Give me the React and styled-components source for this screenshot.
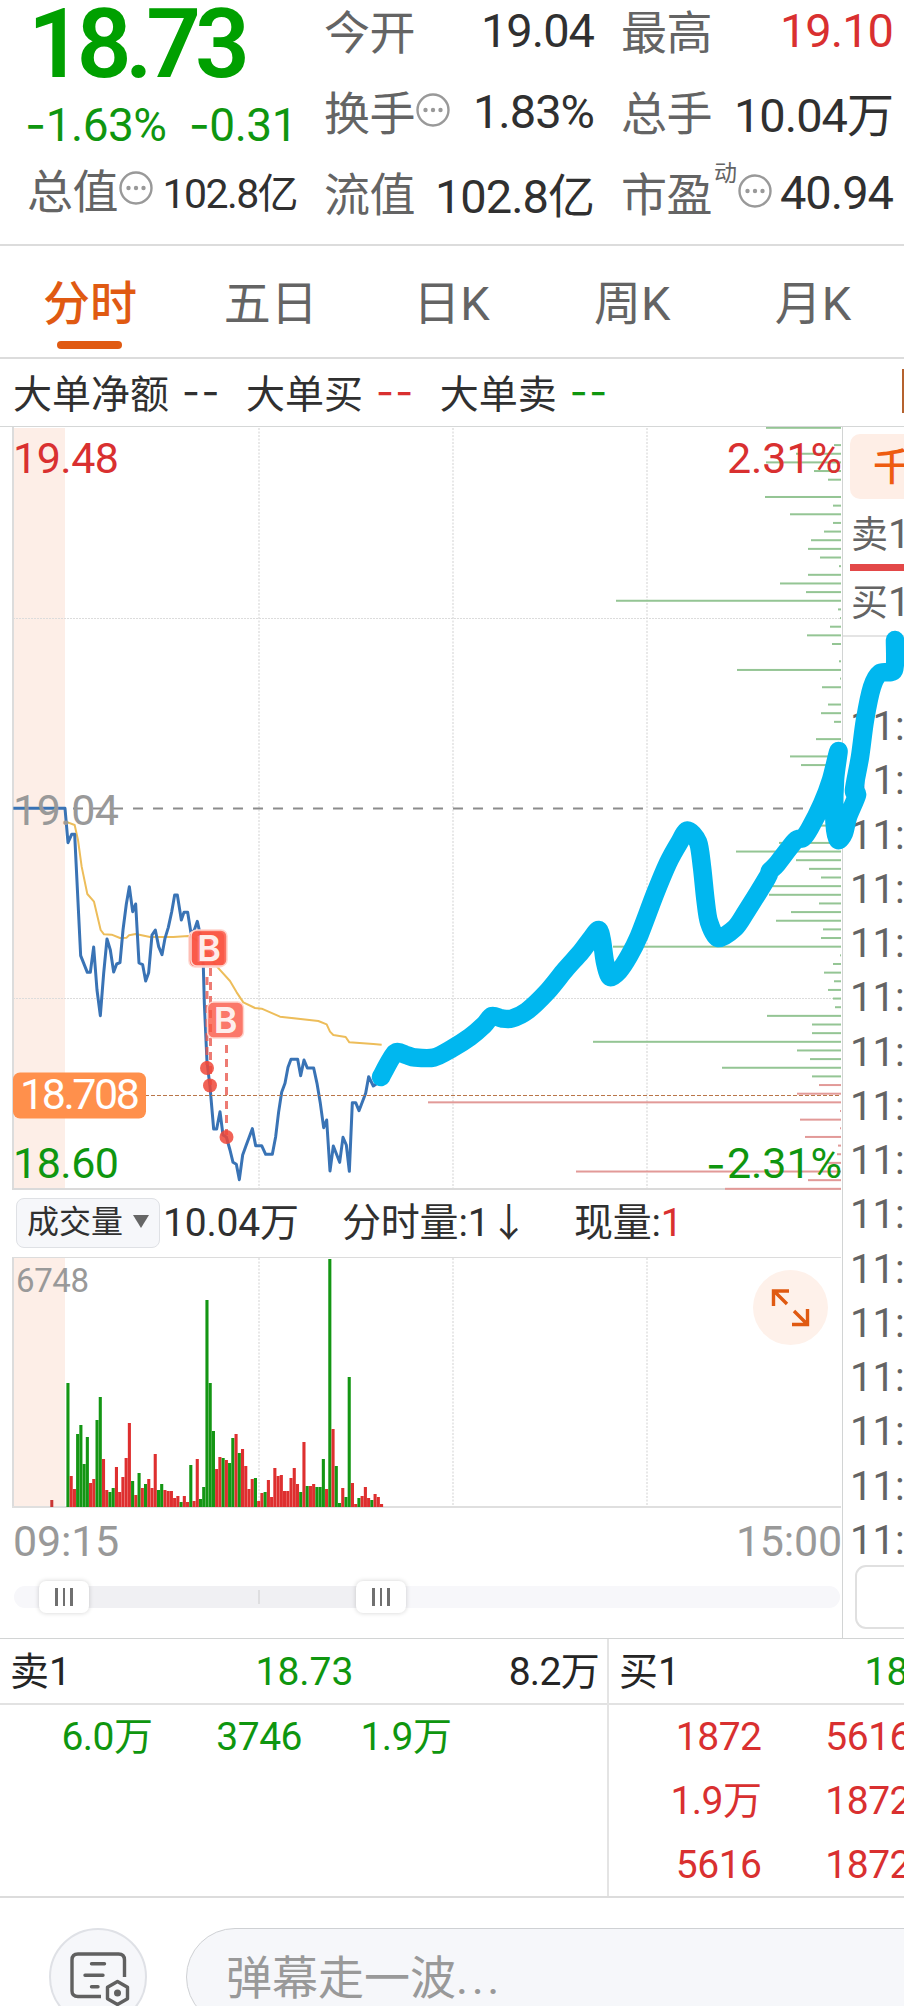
import styled, { createGlobalStyle } from "styled-components"

const GlobalStyle = createGlobalStyle`
    * { box-sizing: border-box; }
    body {
        margin: 0;
        background: #fff;
        color: #303030;
        font-family: Roboto, "Noto Sans CJK SC", sans-serif;
        overflow: hidden;
    }
`
const RED = "#d93030"
const GREEN = "#0f960f"

const Page = styled.div`
    position: relative;
    width: 904px;
    height: 2006px;
    overflow: hidden;
    white-space: nowrap;
`
const Header = styled.header`
    display: grid;
    grid-template-columns: 269px 269px 271px;
    column-gap: 28px;
    height: 246px;
    padding-left: 28px;
    border-bottom: 2px solid #dcdcdc;
`
const StatColumn = styled.div`
    display: flex;
    flex-direction: column;
    margin-top: ${p => p.$top || 0}px;
`
const Price = styled.div`
    height: 77px;
    line-height: 89px;
    font-size: 96px;
    font-weight: 600;
    letter-spacing: -6.2px;
    color: #00a000;
`
const Change = styled.div`
    display: flex;
    justify-content: space-between;
    height: 76px;
    line-height: 95px;
    font-size: 46px;
    letter-spacing: -0.5px;
    color: ${GREEN};
    & > span { margin-left: -3px; }
`
const Stat = styled.div`
    display: flex;
    align-items: center;
    height: 81px;
    & > svg { flex: none; margin: -4px 0 0 1px; }
`
const StatName = styled.span`
    margin: -4px 0 0 -1px;
    font-size: 46px;
    letter-spacing: -0.5px;
    color: #646464;
`
const Sup = styled.span`
    margin: 5px 0 0 2px;
    align-self: flex-start;
    font-size: 23px;
    line-height: 34px;
    color: #646464;
`
const StatValue = styled.span`
    margin-left: auto;
    font-size: ${p => p.$size || 47}px;
    letter-spacing: ${p => p.$size ? -1.6 : -1}px;
    color: ${p => p.$color || "#303030"};
`
const Hyphen = styled.span`
    font-family: Inter, sans-serif;
    color: ${p => p.$color || "inherit"};
`
const Tabs = styled.nav`
    display: flex;
    height: 113px;
    border-bottom: 2px solid #dcdcdc;
`
const Tab = styled.div`
    flex: 1;
    display: flex;
    flex-direction: column;
    align-items: center;
    margin-left: -1px;
    font-size: 47px;
    line-height: 115px;
    color: ${p => p.$active ? "#e05a12" : "#646464"};
    font-weight: ${p => p.$active ? 500 : 400};
    &::after {
        content: "";
        width: 65px;
        height: 8px;
        margin-top: -20px;
        border-radius: 4px;
        background: ${p => p.$active ? "#e05a12" : "transparent"};
    }
`
const OrderBar = styled.div`
    display: flex;
    align-items: center;
    gap: 25px;
    height: 68px;
    padding: 0 0 4px 13px;
    border-bottom: 1px solid #d5d7d7;
    font-size: 39px;
    & > span { display: flex; gap: 13px; }
    & > span > span {
        padding-top: 5px;
        letter-spacing: 1.5px;
    }
`
const OrderEdge = styled.i`
    margin-left: auto;
    width: 2px;
    height: 44px;
    background: #b5622e;
`
const Main = styled.main`
    display: flex;
    height: 1211px;
`
const ChartColumn = styled.section`
    width: 843px;
    border-right: 1px solid #d2d4d4;
`
const Chart = styled.svg`
    display: block;
    font-size: 43px;
`
const VolumeBar = styled.div`
    display: flex;
    align-items: center;
    height: 67px;
    padding: 0 0 2px 16px;
    font-size: 39px;
    line-height: 54px;
`
const VolumeSelect = styled.div`
    display: flex;
    align-items: center;
    justify-content: space-between;
    width: 144px;
    height: 50px;
    padding: 0 10px 2px 10px;
    margin-right: 3px;
    border: 1px solid #dfe1e5;
    border-radius: 8px;
    background: #f6f7fa;
    font-size: 32px;
`
const Triangle = styled.i`
    border: 8px solid transparent;
    border-top: 13px solid #666;
    border-bottom: 0;
`
const VolumeItem = styled.span`
    width: ${p => p.$width}px;
    margin-top: 1px;
    letter-spacing: -0.2px;
`
const RedText = styled.span`
    color: ${RED};
`
const TimeAxis = styled.div`
    display: flex;
    justify-content: space-between;
    height: 66px;
    padding: 0 0 0 13px;
    line-height: 66px;
    font-size: 43px;
    letter-spacing: -0.2px;
    color: #999;
`
const Track = styled.div`
    display: flex;
    align-items: center;
    width: 826px;
    height: 22px;
    margin: 12px 0 0 14px;
    padding-left: 25px;
    border-radius: 11px;
    background: #f7f7fa;
`
const Range = styled.div`
    display: flex;
    align-items: center;
    justify-content: space-between;
    width: 367px;
    height: 22px;
    background: #f0f0f3;
`
const Handle = styled.div`
    display: flex;
    align-items: center;
    justify-content: center;
    gap: 5px;
    width: 50px;
    height: 32px;
    border-radius: 7px;
    background: #fff;
    box-shadow: 0 0 5px rgba(0, 0, 0, .18);
    & i { width: 2.5px; height: 18px; background: #707070; }
`
const Tick = styled.i`
    width: 2px;
    height: 14px;
    margin-left: 73px;
    background: #dedee0;
`
const Side = styled.aside`
    width: 61px;
    padding: 7px 0 0 7px;
    overflow: hidden;
    color: #646464;
`
const SideButton = styled.div`
    height: 65px;
    width: 120px;
    padding-left: 23px;
    border-radius: 10px;
    background: #feeee6;
    font-size: 38px;
    font-weight: 500;
    line-height: 66px;
    color: #ee5c10;
`
const SideQuote = styled.div`
    height: ${p => p.$height}px;
    padding-left: 1px;
    line-height: ${p => p.$line}px;
    font-size: 40px;
    & span { font-size: 37px; }
`
const RedLine = styled.div`
    height: 7px;
    background: #e34848;
`
const SideDivider = styled.div`
    height: 2px;
    margin-left: -7px;
    background: #e4e4e4;
`
const TickTimes = styled.div`
    padding: 63px 0 0 0;
    font-size: 40px;
    line-height: 54.25px;
`
const SideBox = styled.div`
    width: 100px;
    height: 64px;
    margin: -3px 0 0 5px;
    border: 2px solid #e0e0e0;
    border-radius: 11px;
`
const Book = styled.section`
    display: grid;
    grid-template-columns: 609px 609px;
    grid-template-rows: 257px;
    height: 260px;
    border-top: 1px solid #d2d4d4;
    border-bottom: 2px solid #dcdcdc;
    font-size: 39px;
`
const BookSide = styled.div`
    border-right: 2px solid #e4e4e4;
`
const BookHead = styled.div`
    display: grid;
    grid-template-columns: 1fr 1fr 1fr;
    height: 66px;
    padding: 0 8px 0 10px;
    border-bottom: 2px solid #e2e2e2;
    line-height: 67px;
    color: #252525;
    & span:nth-child(2) { text-align: center; color: ${GREEN}; }
    & span:nth-child(3) { text-align: right; letter-spacing: -0.7px; }
`
const BookCells = styled.div`
    display: grid;
    grid-template-columns: repeat(4, 149.5px);
    padding: 0 0 0 3px;
    line-height: 64px;
    letter-spacing: -0.5px;
    text-align: right;
    color: ${p => p.$color};
`
const Footer = styled.footer`
    display: flex;
    gap: 39px;
    padding: 30px 0 0 49px;
`
const NoteButton = styled.div`
    display: flex;
    width: 98px;
    height: 98px;
    border: 2px solid #dfe1e6;
    border-radius: 50%;
    background: #f6f7fa;
`
const CommentBox = styled.div`
    flex: none;
    width: 900px;
    height: 98px;
    padding-left: 39px;
    border: 1px solid #cfd1d4;
    border-radius: 49px;
    background: #f6f7fa;
    font-size: 46px;
    line-height: 98px;
    color: #999;
    & span { letter-spacing: 3.5px; }
`
const Sketch = styled.svg`
    position: absolute;
    left: 0;
    top: 0;
    pointer-events: none;
`

// length of each order bar on the right edge, top to bottom
const depth = [
    75, 0, 7, 45, 75, 27, 13, 0, 76, 8, 51, 8, 17, 30, 33, 21, 2, 33, 61, 35, 225, 3,
    1, 11, 34, 9, 0, 2, 104, 1, 19, 0, 13, 20, 7, 0, 25, 0, 51, 40, 0, 0, 0, 0, 0, 0,
    22, 0, 62, 105, 45, 32, 20, 71, 72, 22, 50, 65, 18, 20, 228, 1, 8, 17, 7, 13, 8, 6,
    74, 29, 29, 248, 44, 31, 119, 29, 22, 44, 413, 1, 41, 1, 36, 3, 4, 14, 265, 33, 116
]

const volume = `g124 r31 r18 g73 g82 g43 g70 r24 r28 g87 g110 r48 r17 g15 g19 r40 r15 r30 r49 r84 g26 r12
g34 r19 g23 r28 r19 r53 g17 g23 r17 r16 r16 r9 r11 g5 r11 r5 g42 r6 r48 g8 g20 g207 g124 g76 r38 r50 g49
r47 g44 g69 r73 g54 r58 r41 r18 r28 g29 r6 r14 g15 r27 r10 r39 r31 r32 r16 r16 r29 r39 r23 g15 r65 g21
r21 r23 g20 g20 g48 r18 g248 r78 g41 g4 r19 g10 g130 r24 r3 g9 r11 r20 r9 g7 r13 r10 r3`.split(/\s+/)

const pricePoints = `40,55 195,55 204,158 215,133 224,133 242,497 262,547 271,547 281,471 291,600 301,677
311,550 321,447 331,480 341,546 350,522 360,518 369,420 379,342 388,290 398,365 407,342 417,519 428,524
437,573 446,548 456,435 466,420 476,470 486,494 495,445 505,412 515,366 524,315 532,315 544,390 552,367
563,367 573,430 583,420 592,394 602,440 610,530 613,640 621,815 630,890 641,1017 650,1017 660,965
669,1035 679,1041 690,1080 699,1117 709,1123 718,1169 728,1095 738,1067 757,1016 767,1067 785,1067
797,1093 817,1093 827,1040 836,965 845,907 855,880 864,832 873,808 893,808 902,857 912,810 922,834
941,834 951,880 961,940 971,1013 980,990 990,1143 1000,1068 1019,1117 1029,1042 1039,1065 1048,1144
1057,938 1067,938 1077,962 1097,910 1106,860 1120,888 1132,880`

const averagePoints = `195,94 224,105 234,150 245,230 262,312 282,335 302,420 312,433 335,434 360,444
380,443 387,436 407,432 425,436 450,441 520,441 565,438 590,450 653,532 690,573 710,607 730,637 765,654
785,656 840,680 955,693 980,703 990,725 1000,735 1037,741 1048,757 1120,762 1145,764`

const sketchPoints = [
    [381, 1077], [395, 1053], [406, 1055], [415, 1057.5], [434, 1057.5], [452, 1048.5], [470, 1037], [484, 1025],
    [492, 1016], [502, 1018.5], [512, 1018.5], [527, 1011], [547, 992], [565, 970], [581, 952], [590, 940],
    [598.5, 930], [602, 941], [605, 962], [610, 977], [619, 971], [629, 956], [639, 936], [655, 894], [668, 863],
    [679, 843], [687.5, 830.5], [698, 842], [702, 867], [705.5, 900], [709, 922], [718, 938], [735, 928],
    [746, 912], [767, 878], [770, 871], [777, 864], [795, 841], [803, 838], [810, 828], [822, 804], [831, 780],
    [838.5, 751], [835, 780], [834.5, 822], [838, 840], [844, 833], [848, 817], [857, 795], [854, 790],
    [860, 757], [865, 720], [872, 687], [880, 673], [894, 670], [895, 640]
]

// catmull-rom through all the points
const smooth = (pts) => {
    let d = `M${pts[0]}`
    for(let i = 0; i < pts.length - 1; i++){
        const a = pts[i - 1] || pts[i]
        const b = pts[i]
        const c = pts[i + 1]
        const e = pts[i + 2] || c
        d += `C${b[0] + (c[0] - a[0]) / 7},${b[1] + (c[1] - a[1]) / 7} ${c[0] - (e[0] - b[0]) / 7},${c[1] - (e[1] - b[1]) / 7} ${c}`
    }
    return d
}

const More = () => <svg width="34" height="34" viewBox="0 0 34 34">
    <circle cx="17" cy="17" r="15.5" fill="none" stroke="#999" strokeWidth="2.4" />
    {[9.5, 17, 24.5].map(x => <circle key={x} cx={x} cy="17" r="2.2" fill="#999" />)}
</svg>

const GridLines = ({ y1, y2 }) => <g stroke="#e6e6e6" strokeWidth="1.8" strokeDasharray="2 1.5">
    {[259, 453, 647].map(x => <path key={x} d={`M${x} ${y1}V${y2}`} />)}
</g>

const Buy = ({ x, y }) => <g>
    <rect x={x} y={y} width="36" height="36" rx="6" fill="#fa5240" fillOpacity=".78" stroke="#ffd5ce" strokeWidth="1.5" />
    <text x={x + 18} y={y + 30.5} textAnchor="middle" fontFamily="Inter" fontSize="36" fontWeight="600" fill="#fff" fillOpacity=".9">B</text>
</g>

const PriceChart = () => <Chart width="842" height="763" viewBox="0 427 842 763">
    <rect x="13" y="428" width="52" height="761" fill="#fdeee7" />
    <path d="M13 427V1189" stroke="#dcdcdc" strokeWidth="2" />
    <path d="M12 1189H841" stroke="#dadada" strokeWidth="2" />
    <GridLines y1={428} y2={1188} />
    <path d="M13 618.5H841M13 998.5H841" stroke="#dcdcdc" strokeDasharray="2 1" />
    {depth.map((w, i) => w > 0 &&
        <rect key={i} x={841 - w} y={426.8 + i * 8.648} width={w} height="2" fill={i > 75 ? "#e29a98" : "#94c594"} />
    )}
    <path d="M73 808.5H841" stroke="#8c8c8c" strokeWidth="2" strokeDasharray="10 10" />
    <g transform="translate(0 790) scale(.33333)" fill="none" strokeLinejoin="round">
        <polyline points={averagePoints} stroke="#edbd5a" strokeWidth="6" />
        <polyline points={pricePoints} stroke="#3973b5" strokeWidth="9" />
    </g>
    <g stroke="#e85a50" strokeOpacity=".8" strokeWidth="3" strokeDasharray="8 6" fill="none">
        <path d="M207 977V1065M210.5 968V1085M226.5 1045V1135" />
    </g>
    <g fill="#ef4638" fillOpacity=".85">
        <circle cx="207" cy="1068" r="7" />
        <circle cx="210" cy="1085.5" r="7" />
        <circle cx="226.5" cy="1137" r="7" />
    </g>
    <Buy x={189} y={931} />
    <Buy x={191} y={930} />
    <Buy x={207.5} y={1002} />
    <path d="M13 1095.5H841" stroke="#b9764a" strokeWidth="1.1" strokeDasharray="4 2" />
    <rect x="13" y="1072.5" width="133" height="46" rx="7" fill="#ff904c" />
    <text x="20" y="1109" fill="#fff" textLength="120">18.708</text>
    <text x="13" y="473" fill={RED} textLength="106">19.48</text>
    <text x="13" y="825" fill="#999" textLength="106">19.04</text>
    <text x="13" y="1178" fill={GREEN} textLength="106">18.60</text>
    <text x="727" y="473" fill={RED} textLength="115">2.31%</text>
    <text x="727" y="1178" fill={GREEN} textLength="115">2.31%</text>
    <text x="706" y="1180" fill={GREEN} fontFamily="Inter">-</text>
</Chart>

const VolumeChart = () => <Chart width="842" height="251" viewBox="0 1257 842 251">
    <rect x="13" y="1258" width="52" height="249" fill="#fdeee7" />
    <path d="M13 1257V1508" stroke="#dcdcdc" strokeWidth="2" />
    <path d="M12 1257.5H841" stroke="#dcdcdc" />
    <path d="M12 1507H841" stroke="#dfdfdf" strokeWidth="2" />
    <GridLines y1={1258} y2={1506} />
    <rect x="50.3" y="1500" width="3" height="7" fill="#c93535" />
    {volume.map((v, i) =>
        <rect key={i} x={66.4 + i * 3.233} y={1507 - v.slice(1)} width="3.1" height={v.slice(1)} fill={v[0] === "g" ? "#149614" : "#de2f2f"} />
    )}
    <text x="16" y="1292" fontSize="33" fill="#999" textLength="73">6748</text>
    <circle cx="790.5" cy="1307.5" r="37.5" fill="#fef1ea" />
    <path d="M787 1304L774 1291M789 1291H773.5V1306M794 1311L807 1324M792 1324.5H807.5V1309" fill="none" stroke="#e05a12" strokeWidth="3.4" />
</Chart>

const NoteIcon = () => <svg width="94" height="94" viewBox="51 1930 94 94" fill="none" stroke="#606060" strokeWidth="3.4" strokeLinejoin="round">
    <path d="M124.5 1977V1960Q124.5 1954 118.500 1954H78Q72 1954 72 1960V1991Q72 1996.500 78 1996.500H101" />
    <path d="M91.500 1963.700H104.500M85 1975.300H103M91.500 1986.700H98" strokeLinecap="round" />
    <path d="M117.500 1981.500L127.500 1987.300V1998.700L117.500 2004.500L107.500 1998.700V1987.300Z" />
    <circle cx="117.500" cy="1993" r="3.500" fill="#606060" stroke="none" />
</svg>

export default function App(){
    return <Page>
        <GlobalStyle />
        <Header>
            <StatColumn>
                <Price>18.73</Price>
                <Change>
                    <span><Hyphen>-</Hyphen>1.63%</span>
                    <span><Hyphen>-</Hyphen>0.31</span>
                </Change>
                <StatColumn $top={-4}>
                    <Stat>
                        <StatName>总值</StatName><More />
                        <StatValue $size={41}>102.8亿</StatValue>
                    </Stat>
                </StatColumn>
            </StatColumn>
            <StatColumn $top={-10}>
                <Stat><StatName>今开</StatName><StatValue>19.04</StatValue></Stat>
                <Stat><StatName>换手</StatName><More /><StatValue>1.83%</StatValue></Stat>
                <Stat><StatName>流值</StatName><StatValue>102.8亿</StatValue></Stat>
            </StatColumn>
            <StatColumn $top={-10}>
                <Stat><StatName>最高</StatName><StatValue $color={RED}>19.10</StatValue></Stat>
                <Stat><StatName>总手</StatName><StatValue>10.04万</StatValue></Stat>
                <Stat><StatName>市盈</StatName><Sup>动</Sup><More /><StatValue>40.94</StatValue></Stat>
            </StatColumn>
        </Header>
        <Tabs>
            {["分时", "五日", "日K", "周K", "月K"].map((name, i) => <Tab key={name} $active={i === 0}>{name}</Tab>)}
        </Tabs>
        <OrderBar>
            <span>大单净额 <Hyphen>--</Hyphen></span>
            <span>大单买 <Hyphen $color={RED}>--</Hyphen></span>
            <span>大单卖 <Hyphen $color={GREEN}>--</Hyphen></span>
            <OrderEdge />
        </OrderBar>
        <Main>
            <ChartColumn>
                <PriceChart />
                <VolumeBar>
                    <VolumeSelect>成交量<Triangle /></VolumeSelect>
                    <VolumeItem $width={179}>10.04万</VolumeItem>
                    <VolumeItem $width={232}>分时量:1↓</VolumeItem>
                    <VolumeItem>现量:<RedText>1</RedText></VolumeItem>
                </VolumeBar>
                <VolumeChart />
                <TimeAxis><span>09:15</span><span>15:00</span></TimeAxis>
                <Track>
                    <Range>
                        <Handle><i /><i /><i /></Handle>
                        <Tick />
                        <Handle><i /><i /><i /></Handle>
                    </Range>
                </Track>
            </ChartColumn>
            <Side>
                <SideButton>千</SideButton>
                <SideQuote $height={65} $line={72}><span>卖</span>1</SideQuote>
                <RedLine />
                <SideQuote $height={64} $line={64}><span>买</span>1</SideQuote>
                <SideDivider />
                <TickTimes>
                    {Array.from({ length: 16 }, (_, i) => <div key={i}>11:</div>)}
                </TickTimes>
                <SideBox />
            </Side>
        </Main>
        <Book>
            <BookSide>
                <BookHead><span>卖1</span><span>18.73</span><span>8.2万</span></BookHead>
                <BookCells $color={GREEN}>
                    <span>6.0万</span><span>3746</span><span>1.9万</span>
                </BookCells>
            </BookSide>
            <BookSide>
                <BookHead><span>买1</span><span>18.72</span><span /></BookHead>
                <BookCells $color={RED}>
                    <span>1872</span><span>5616</span><span /><span />
                    <span>1.9万</span><span>1872</span><span /><span />
                    <span>5616</span><span>1872</span>
                </BookCells>
            </BookSide>
        </Book>
        <Footer>
            <NoteButton><NoteIcon /></NoteButton>
            <CommentBox>弹幕走一波<span>...</span></CommentBox>
        </Footer>
        <Sketch width="904" height="2006">
            <path d={smooth(sketchPoints)} fill="none" stroke="#00b7ef" strokeWidth="18.5" strokeLinecap="round" strokeLinejoin="round" />
        </Sketch>
    </Page>
}
